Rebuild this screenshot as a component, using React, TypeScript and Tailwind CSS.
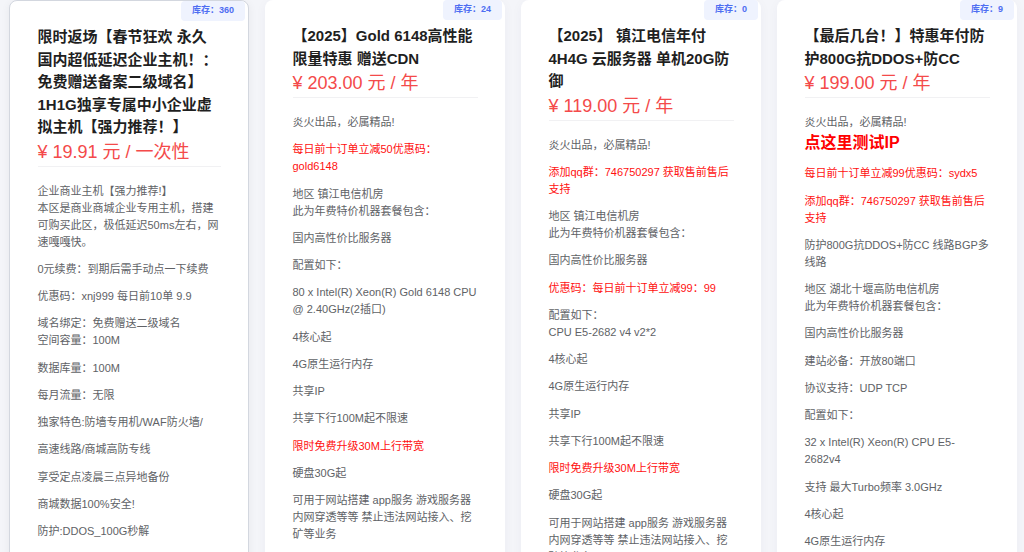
import React from 'react'

type Para = { lines: string[]; red?: boolean; big?: string }

interface Product {
  stock: number
  title: string
  price: string
  active?: boolean
  body: Para[]
}

const products: Product[] = [
  {
    stock: 360,
    title: '限时返场【春节狂欢 永久国内超低延迟企业主机！：免费赠送备案二级域名】1H1G独享专属中小企业虚拟主机【强力推荐！】',
    price: '¥ 19.91 元 / 一次性',
    active: true,
    body: [
      { lines: ['企业商业主机【强力推荐!】', '本区是商业商城企业专用主机，搭建可购买此区，极低延迟50ms左右，网速嘎嘎快。'] },
      { lines: ['0元续费：到期后需手动点一下续费'] },
      { lines: ['优惠码：xnj999 每日前10单 9.9'] },
      { lines: ['域名绑定：免费赠送二级域名', '空间容量：100M'] },
      { lines: ['数据库量：100M'] },
      { lines: ['每月流量：无限'] },
      { lines: ['独家特色:防墙专用机/WAF防火墙/'] },
      { lines: ['高速线路/商城高防专线'] },
      { lines: ['享受定点凌晨三点异地备份'] },
      { lines: ['商城数据100%安全!'] },
      { lines: ['防护:DDOS_100G秒解'] },
    ],
  },
  {
    stock: 24,
    title: '【2025】Gold 6148高性能限量特惠 赠送CDN',
    price: '¥ 203.00 元 / 年',
    body: [
      { lines: ['炎火出品，必属精品!'] },
      { lines: ['每日前十订单立减50优惠码：', 'gold6148'], red: true },
      { lines: ['地区 镇江电信机房', '此为年费特价机器套餐包含：'] },
      { lines: ['国内高性价比服务器'] },
      { lines: ['配置如下：'] },
      { lines: ['80 x Intel(R) Xeon(R) Gold 6148 CPU @ 2.40GHz(2插口)'] },
      { lines: ['4核心起'] },
      { lines: ['4G原生运行内存'] },
      { lines: ['共享IP'] },
      { lines: ['共享下行100M起不限速'] },
      { lines: ['限时免费升级30M上行带宽'], red: true },
      { lines: ['硬盘30G起'] },
      { lines: ['可用于网站搭建 app服务 游戏服务器 内网穿透等等 禁止违法网站接入、挖矿等业务'] },
    ],
  },
  {
    stock: 0,
    title: '【2025】 镇江电信年付 4H4G 云服务器 单机20G防御',
    price: '¥ 119.00 元 / 年',
    body: [
      { lines: ['炎火出品，必属精品!'] },
      { lines: ['添加qq群：746750297 获取售前售后支持'], red: true },
      { lines: ['地区 镇江电信机房', '此为年费特价机器套餐包含：'] },
      { lines: ['国内高性价比服务器'] },
      { lines: ['优惠码：每日前十订单立减99：99'], red: true },
      { lines: ['配置如下：', 'CPU E5-2682 v4 v2*2'] },
      { lines: ['4核心起'] },
      { lines: ['4G原生运行内存'] },
      { lines: ['共享IP'] },
      { lines: ['共享下行100M起不限速'] },
      { lines: ['限时免费升级30M上行带宽'], red: true },
      { lines: ['硬盘30G起'] },
      { lines: ['可用于网站搭建 app服务 游戏服务器 内网穿透等等 禁止违法网站接入、挖矿等业务'] },
    ],
  },
  {
    stock: 9,
    title: '【最后几台！】特惠年付防护800G抗DDOS+防CC',
    price: '¥ 199.00 元 / 年',
    body: [
      { lines: ['炎火出品，必属精品!'], big: '点这里测试IP' },
      { lines: ['每日前十订单立减99优惠码：sydx5'], red: true },
      { lines: ['添加qq群：746750297 获取售前售后支持'], red: true },
      { lines: ['防护800G抗DDOS+防CC 线路BGP多线路'] },
      { lines: ['地区 湖北十堰高防电信机房', '此为年费特价机器套餐包含：'] },
      { lines: ['国内高性价比服务器'] },
      { lines: ['建站必备：开放80端口'] },
      { lines: ['协议支持：UDP TCP'] },
      { lines: ['配置如下：'] },
      { lines: ['32 x Intel(R) Xeon(R) CPU E5-2682v4'] },
      { lines: ['支持 最大Turbo频率 3.0GHz'] },
      { lines: ['4核心起'] },
      { lines: ['4G原生运行内存'] },
    ],
  },
]

function ProductCard({ p }: { p: Product }) {
  return (
    <div
      className={`relative w-[240px] shrink-0 rounded-[8px] bg-white px-[27.5px] pt-[25px] pb-6 ${
        p.active ? 'border border-[#d3d7df] shadow-[0_2px_10px_rgba(0,0,0,0.06)]' : 'shadow-[0_2px_12px_rgba(30,40,90,0.04)]'
      }`}
    >
      <div className="absolute top-0 right-[3px] flex h-[20px] items-center rounded-[4px] bg-[#eff3fe] px-[11px] text-[9px] font-bold text-[#4e6ef2]">
        库存：{p.stock}
      </div>
      <h3 className="pr-[2px] text-[15px] font-bold leading-[22.5px] text-[#1f1f1f]">{p.title}</h3>
      <div className="border-b border-[#f1f1f3] text-[18px] leading-[27px] text-[#f44a4a]">{p.price}</div>
      <div className="flex flex-col gap-[10.25px] pt-[16px] text-[11px] leading-[17px] text-[#606266]">
        {p.body.map((para, i) => (
          <p key={i} className={para.red ? 'text-[#ff1010]' : ''}>
            {para.lines.map((l, j) => (
              <span key={j} className="block">
                {l}
              </span>
            ))}
            {para.big && (
              <span className="block text-[16px] font-bold leading-[24px] text-[#ff0000]">{para.big}</span>
            )}
          </p>
        ))}
      </div>
    </div>
  )
}

export default function App() {
  return (
    <div
      className="h-[552px] w-[1024px] overflow-hidden bg-[#f4f5f9]"
      style={{ fontFamily: '"Liberation Sans", "Noto Sans CJK SC", sans-serif' }}
    >
      <div className="flex items-start gap-4 pl-[9px]">
        {products.map((p, i) => (
          <ProductCard key={i} p={p} />
        ))}
      </div>
    </div>
  )
}
